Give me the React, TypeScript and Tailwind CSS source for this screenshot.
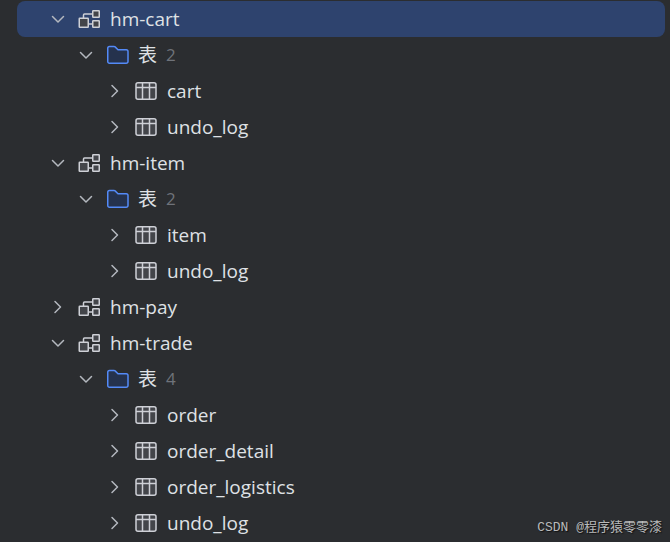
import { useState } from "react";

type NodeKind = "schema" | "folder" | "table";

type TreeNode = {
  id: string;
  label: string;
  kind: NodeKind;
  count?: number;
  open?: boolean;
  children?: TreeNode[];
};

const table = (schema: string, label: string): TreeNode => ({ id: `${schema}.${label}`, label, kind: "table" });

const schema = (name: string, tables: string[], open = true): TreeNode => ({
  id: name,
  label: name,
  kind: "schema",
  open,
  children: [
    {
      id: `${name}/tables`,
      label: "表",
      kind: "folder",
      count: tables.length,
      open: true,
      children: tables.map((t) => table(name, t)),
    },
  ],
});

const schemas: TreeNode[] = [
  schema("hm-cart", ["cart", "undo_log"]),
  schema("hm-item", ["item", "undo_log"]),
  schema("hm-pay", ["pay_order", "undo_log"], false),
  schema("hm-trade", ["order", "order_detail", "order_logistics", "undo_log"]),
];

const indents = ["pl-[29px]", "pl-[57px]", "pl-[86px]"];

function Chevron({ open }: { open: boolean }) {
  return (
    <svg viewBox="0 0 24 24" className="h-6 w-6" fill="none" stroke="#b4b8bf" strokeWidth="1.5" strokeLinecap="round" strokeLinejoin="round">
      <path d={open ? "M6.5 9.5 12 15l5.5-5.5" : "M9 6.5 14.5 12 9 17.5"} />
    </svg>
  );
}

function NodeIcon({ kind }: { kind: NodeKind }) {
  if (kind === "folder") {
    return (
      <svg viewBox="0 0 24 24" className="h-6 w-6 shrink-0" fill="#25324d" stroke="#548af7" strokeWidth="1.5" strokeLinejoin="round">
        <path d="M2.75 5.25a1.75 1.75 0 0 1 1.75-1.75h4.6a1.5 1.5 0 0 1 1 .4l2.9 2.85h8.25A1.75 1.75 0 0 1 23 8.5v10a1.75 1.75 0 0 1-1.75 1.75H4.5a1.75 1.75 0 0 1-1.75-1.75z" />
      </svg>
    );
  }
  if (kind === "table") {
    return (
      <svg viewBox="0 0 24 24" className="h-6 w-6 shrink-0" fill="#43454a" stroke="#ced0d6" strokeWidth="1.5">
        <rect x="2" y="3.75" width="20" height="16.5" rx="2" />
        <path d="M2 8.5h20M8.5 3.75v16.5M15.5 3.75v16.5" fill="none" />
      </svg>
    );
  }
  return (
    <svg viewBox="0 0 24 24" className="h-6 w-6 shrink-0" fill="#43454a" stroke="#ced0d6" strokeWidth="1.5">
      <path d="M6.5 11V8a1 1 0 0 1 1-1H16M11 17h5" fill="none" />
      <rect x="2.25" y="11.25" width="9" height="9" rx="0.5" />
      <rect x="15.75" y="3.75" width="6.5" height="6.5" rx="0.5" />
      <rect x="15.75" y="13.75" width="6.5" height="6.5" rx="0.5" />
    </svg>
  );
}

function TreeRow({ node, depth, selected, onSelect }: { node: TreeNode; depth: number; selected: string; onSelect: (id: string) => void }) {
  const [open, setOpen] = useState(node.open ?? false);
  const active = selected === node.id;

  return (
    <li role="treeitem" aria-expanded={open} aria-selected={active}>
      <div className={`flex h-9 items-center rounded-lg ${indents[depth]} ${active ? "bg-[#2e436e]" : ""}`}>
        <button type="button" aria-label={open ? "Collapse" : "Expand"} className="mr-[7px] shrink-0" onClick={() => setOpen(!open)}>
          <Chevron open={open} />
        </button>
        <button type="button" className="flex flex-1 items-center gap-[9px] text-left" onClick={() => onSelect(node.id)}>
          <NodeIcon kind={node.kind} />
          <span>{node.label}</span>
          {node.count !== undefined && <span className="text-[17px] text-[#6f737a]">{node.count}</span>}
        </button>
      </div>
      {open && node.children && (
        <ul role="group">
          {node.children.map((child) => (
            <TreeRow key={child.id} node={child} depth={depth + 1} selected={selected} onSelect={onSelect} />
          ))}
        </ul>
      )}
    </li>
  );
}

export default function App() {
  const [selected, setSelected] = useState("hm-cart");

  return (
    <main className="relative min-h-screen bg-[#2b2d30] pt-px pr-[5px] pl-[17px] font-['Open_Sans','Noto_Sans_CJK_SC',sans-serif] text-[19px] leading-6 text-[#dfe1e5]">
      <ul role="tree" aria-label="Schemas">
        {schemas.map((node) => (
          <TreeRow key={node.id} node={node} depth={0} selected={selected} onSelect={setSelected} />
        ))}
      </ul>
      <span className="pointer-events-none absolute right-2 bottom-1 font-['Liberation_Mono','Noto_Sans_CJK_SC',monospace] text-[13px] leading-5 text-[#b9babb] [text-shadow:1px_1px_1px_#111]">
        CSDN @程序猿零零漆
      </span>
    </main>
  );
}
